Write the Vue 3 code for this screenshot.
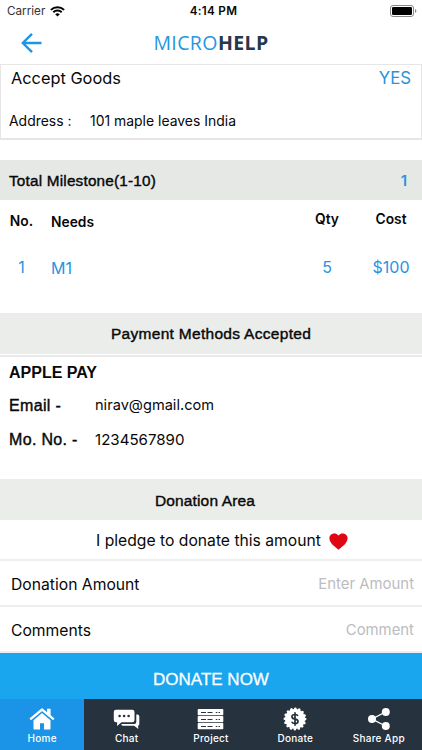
<script setup>
const tabs = [
  { id: 'home', label: 'Home' },
  { id: 'chat', label: 'Chat' },
  { id: 'project', label: 'Project' },
  { id: 'donate', label: 'Donate' },
  { id: 'share', label: 'Share App' }
]
</script>

<template>
  <div class="screen">
    <div class="status">
      <div class="carrier">
        <span>Carrier</span>
        <svg width="15" height="11" viewBox="0 0 15 11">
          <path d="M.9 3.9a9.5 9.5 0 0 1 13.2 0M3.3 6.3a6 6 0 0 1 8.4 0" fill="none" stroke="#000" stroke-width="2" />
          <path d="M7.5 10.6L5.2 8.3a3.3 3.3 0 0 1 4.6 0z" />
        </svg>
      </div>
      <span class="time">4:14 PM</span>
      <svg class="battery" width="27" height="12" viewBox="0 0 27 12">
        <rect x=".5" y=".5" width="23" height="11" rx="2.5" fill="none" stroke="#888" />
        <rect x="2" y="2" width="20" height="8" rx="1.2" />
        <path d="M25 4v4q1.4-.6 1.4-2T25 4z" fill="#888" />
      </svg>
    </div>

    <header class="nav">
      <svg class="back" width="21" height="20" viewBox="0 0 21 20">
        <path d="M20.5 10H2M11 .9L1.8 10l9.2 9.1" fill="none" stroke="#1b97e5" stroke-width="2.4" />
      </svg>
      <h1><span class="micro">MICRO</span><span class="help">HELP</span></h1>
    </header>

    <section class="goods">
      <div class="goods-row"><span class="accept">Accept Goods</span><span class="yes">YES</span></div>
      <div class="address"><span class="address-label">Address :</span><span class="address-value">101 maple leaves India</span></div>
    </section>

    <div class="band milestone"><span class="milestone-title">Total Milestone(1-10)</span><span class="count">1</span></div>
    <div class="table head">
      <span class="no">No.</span><span class="needs">Needs</span><span class="qty">Qty</span><span class="cost">Cost</span>
    </div>
    <div class="table body">
      <span class="no">1</span><span class="needs">M1</span><span class="qty">5</span><span class="cost">$100</span>
    </div>

    <div class="band title payment"><span>Payment Methods Accepted</span></div>
    <section class="methods">
      <h2><span>APPLE PAY</span></h2>
      <div class="method"><span class="key">Email -</span><span class="email">nirav@gmail.com</span></div>
      <div class="method"><span class="key">Mo. No. -</span><span class="mobile">1234567890</span></div>
    </section>

    <div class="band title donation"><span>Donation Area</span></div>
    <div class="pledge">
      <span>I pledge to donate this amount</span>
      <svg width="19" height="17" viewBox="0 0 20 17" preserveAspectRatio="none"><path d="M10 16.8C7 14.2.4 10.6.4 5.1.4 1 6.7-1.6 10 2.5c3.3-4.1 9.6-1.5 9.6 2.6 0 5.5-6.6 9.1-9.6 11.7z" fill="#df0713" /></svg>
    </div>
    <div class="field"><span>Donation Amount</span><span class="hint">Enter Amount</span></div>
    <div class="field last"><span>Comments</span><span class="hint">Comment</span></div>

    <div class="submit"><span>DONATE NOW</span></div>
    <nav class="tabs">
      <div v-for="tab in tabs" :key="tab.id" class="tab" :class="tab.id">
        <svg v-if="tab.id === 'home'" width="26" height="22" viewBox="0 0 26 22" fill="#fff">
          <path d="M4.5 12.3L13 5l8.5 7.3v8.4q0 .8-.8.8H15v-6.3h-4v6.3H5.3q-.8 0-.8-.8z" />
          <path d="M1.2 11.8L13 1.8l11.8 10" fill="none" stroke="#1b94e8" stroke-width="4" />
          <path d="M18 .8h3.6v8L18 5.4z" />
          <path d="M1.2 11.4L13 1.6l11.8 9.8" fill="none" stroke="#fff" stroke-width="2.3" />
        </svg>
        <svg v-else-if="tab.id === 'chat'" width="27" height="22" viewBox="0 0 27 22" fill="#fff">
          <path d="M23.3 6.5h1.2q1.8 0 1.8 1.8v7.6q0 1.8-1.3 1.8l.4 3.3-4.3-3.2H10.3q-1.8 0-2-1.9h13q2 0 2-2z" />
          <path d="M3 1.7h16.3q2.2 0 2.2 2.2v8.2q0 2.2-2.2 2.2H8.5L4 18.1l.2-3.8H3q-2.2 0-2.2-2.2V3.9q0-2.2 2.2-2.2z" />
          <g fill="#26333f"><circle cx="6.6" cy="8" r="1.3" /><circle cx="11.1" cy="8" r="1.3" /><circle cx="15.6" cy="8" r="1.3" /></g>
        </svg>
        <svg v-else-if="tab.id === 'project'" width="27" height="22" viewBox="0 0 27 22">
          <g fill="#fff"><rect x=".7" y="1" width="25.6" height="6.3" rx=".8" /><rect x=".7" y="8" width="25.6" height="6.3" rx=".8" /><rect x=".7" y="15" width="25.6" height="6.3" rx=".8" /></g>
          <path d="M4 4.5h5M10.5 4.5h5M4 11.5h5M10.5 11.5h5M4 18.5h5M10.5 18.5h5M18.8 4.5h1.5M21.5 4.5H23M18.8 11.5h1.5M21.5 11.5H23M18.8 18.5h1.5M21.5 18.5H23" stroke="#26333f" stroke-width="1.1" />
        </svg>
        <svg v-else-if="tab.id === 'donate'" width="24" height="24" viewBox="0 0 24 24">
          <circle cx="12" cy="12" r="10.2" fill="#fff" />
          <circle cx="12" cy="12" r="10.2" fill="none" stroke="#fff" stroke-width="2.6" stroke-linecap="round" stroke-dasharray=".1 3.906" />
          <path d="M15 8.9Q14.3 7.5 12 7.5c-4 0-4 3.8-.4 4.4 4.8.7 4.2 4.6.4 4.6q-2.6 0-3.2-1.8M12 5.3v13.4" fill="none" stroke="#26333f" stroke-width="1.7" />
        </svg>
        <svg v-else width="24" height="24" viewBox="0 0 24 24">
          <path d="M18.5 5L5 12l13.5 7" fill="none" stroke="#fff" stroke-width="1.4" />
          <g fill="#fff"><circle cx="5" cy="12" r="4" /><circle cx="18.8" cy="5" r="4" /><circle cx="18.8" cy="19" r="4" /></g>
        </svg>
        <span>{{ tab.label }}</span>
      </div>
    </nav>
  </div>
</template>

<style>
body { margin: 0; background: #fff; }
</style>
<style scoped>
* { box-sizing: border-box; }
.screen { width: 422px; height: 750px; overflow: hidden; display: flex; flex-direction: column; background: #fff; color: #080808; font-family: Inter, sans-serif; font-size: 15.7px; white-space: nowrap; }
.screen > * { flex-shrink: 0; }
.status { height: 22px; display: grid; grid-template-columns: 1fr auto 1fr; align-items: center; padding: 0 5px 0 7px; font-size: 11.7px; }
.carrier { display: flex; gap: 5px; align-items: center; color: #333; }
.time { font-weight: 600; font-size: 11.7px; letter-spacing: .3px; padding-left: 3px; }
.battery { justify-self: end; }
.nav { height: 42px; display: grid; grid-template-columns: 50px 1fr 50px; align-items: center; }
.back { margin-left: 21px; }
h1 { margin: 0; text-align: center; font: 400 19.5px/28px "Open Sans", sans-serif; }
.micro { color: #2697df; letter-spacing: .4px; }
.help { color: #26384b; font-weight: 700; letter-spacing: .4px; }
.goods { height: 76px; border: 1px solid #e6e6e6; border-bottom-width: 2px; }
.goods-row { height: 26px; display: flex; justify-content: space-between; align-items: center; padding: 0 10px; }
.accept { font-size: 16.35px; }
.yes { color: #2894de; font-size: 16.8px; }
.address { display: flex; height: 20px; align-items: center; margin-top: 19px; padding-left: 8px; font-size: 13.95px; }
.address-label { width: 81px; }
.band { height: 41px; background: #ebedeb; display: flex; align-items: center; font-size: 15px; }
.milestone { margin-top: 20px; height: 40px; background: #e6e8e6; justify-content: space-between; padding: 1px 15px 0 9px; }
.milestone-title { font-family: "Liberation Sans", sans-serif; font-size: 15.3px; letter-spacing: .2px; -webkit-text-stroke: .4px #080808; }
.count { color: #2894de; font-weight: 600; }
.table { display: grid; grid-template-columns: 43px 1fr 66px 62px; }
.table > * { text-align: center; }
.table .needs { text-align: left; padding-left: 8px; }
.head { height: 38px; align-items: center; font-size: 13.8px; font-weight: 600; }
.head .no { padding-top: 3px; }
.head .needs { padding-top: 6px; }
.body { height: 50px; margin-top: 4px; align-items: center; color: #2894de; font-size: 16px; }
.body .needs { padding-top: 2px; }
.title { justify-content: center; }
.title span { font-family: "Liberation Sans", sans-serif; font-size: 15.5px; letter-spacing: .3px; padding-top: 1px; -webkit-text-stroke: .4px #080808; }
.title.donation span { letter-spacing: .15px; padding-right: 12px; padding-top: 2px; }
.payment { margin-top: 21px; }
.methods { height: 124px; margin-top: 1px; border-top: 2px solid #e9e9e9; padding-left: 9px; }
h2 { margin: 0; height: 30px; display: flex; align-items: center; font: 700 16px "Liberation Sans", sans-serif; padding-top: 12px; height: 31px; line-height: 18px; padding-top: 1px; }
.method { height: 34px; display: flex; align-items: center; font-size: 15px; }
.email { font-size: 14.6px; }
.mobile { font-size: 15.1px; }
.key { width: 86px; padding-top: 1px; font-family: "Liberation Sans", sans-serif; font-size: 16px; letter-spacing: .33px; -webkit-text-stroke: .4px #080808; }
.pledge { height: 41px; border-bottom: 2px solid #eee; display: flex; justify-content: center; align-items: center; gap: 8px; padding: 2px 0 0 22px; }
.pledge svg { margin-top: 2px; }
.field { height: 46px; border-bottom: 2px solid #eee; display: flex; justify-content: space-between; align-items: center; padding: 2px 8px 0 11px; }
.hint { color: #bcbcc1; font-size: 14.9px; }
.submit { height: 46px; background: #19a6ef; color: #fff; display: flex; align-items: center; justify-content: center; padding-top: 8px; font: 400 17px "Liberation Sans", sans-serif; -webkit-text-stroke: .3px #fff; }
.tabs { height: 51px; display: grid; grid-template-columns: repeat(5, 1fr); background: #26333f; color: #fff; }
.tab { display: flex; flex-direction: column; align-items: center; font-size: 10px; font-weight: 500; letter-spacing: .25px; }
.tab svg { height: 24px; margin-top: 8px; }
.tab span { line-height: 14px; }
.share { padding-right: 2px; }
.home { background: #1b94e8; }
</style>
